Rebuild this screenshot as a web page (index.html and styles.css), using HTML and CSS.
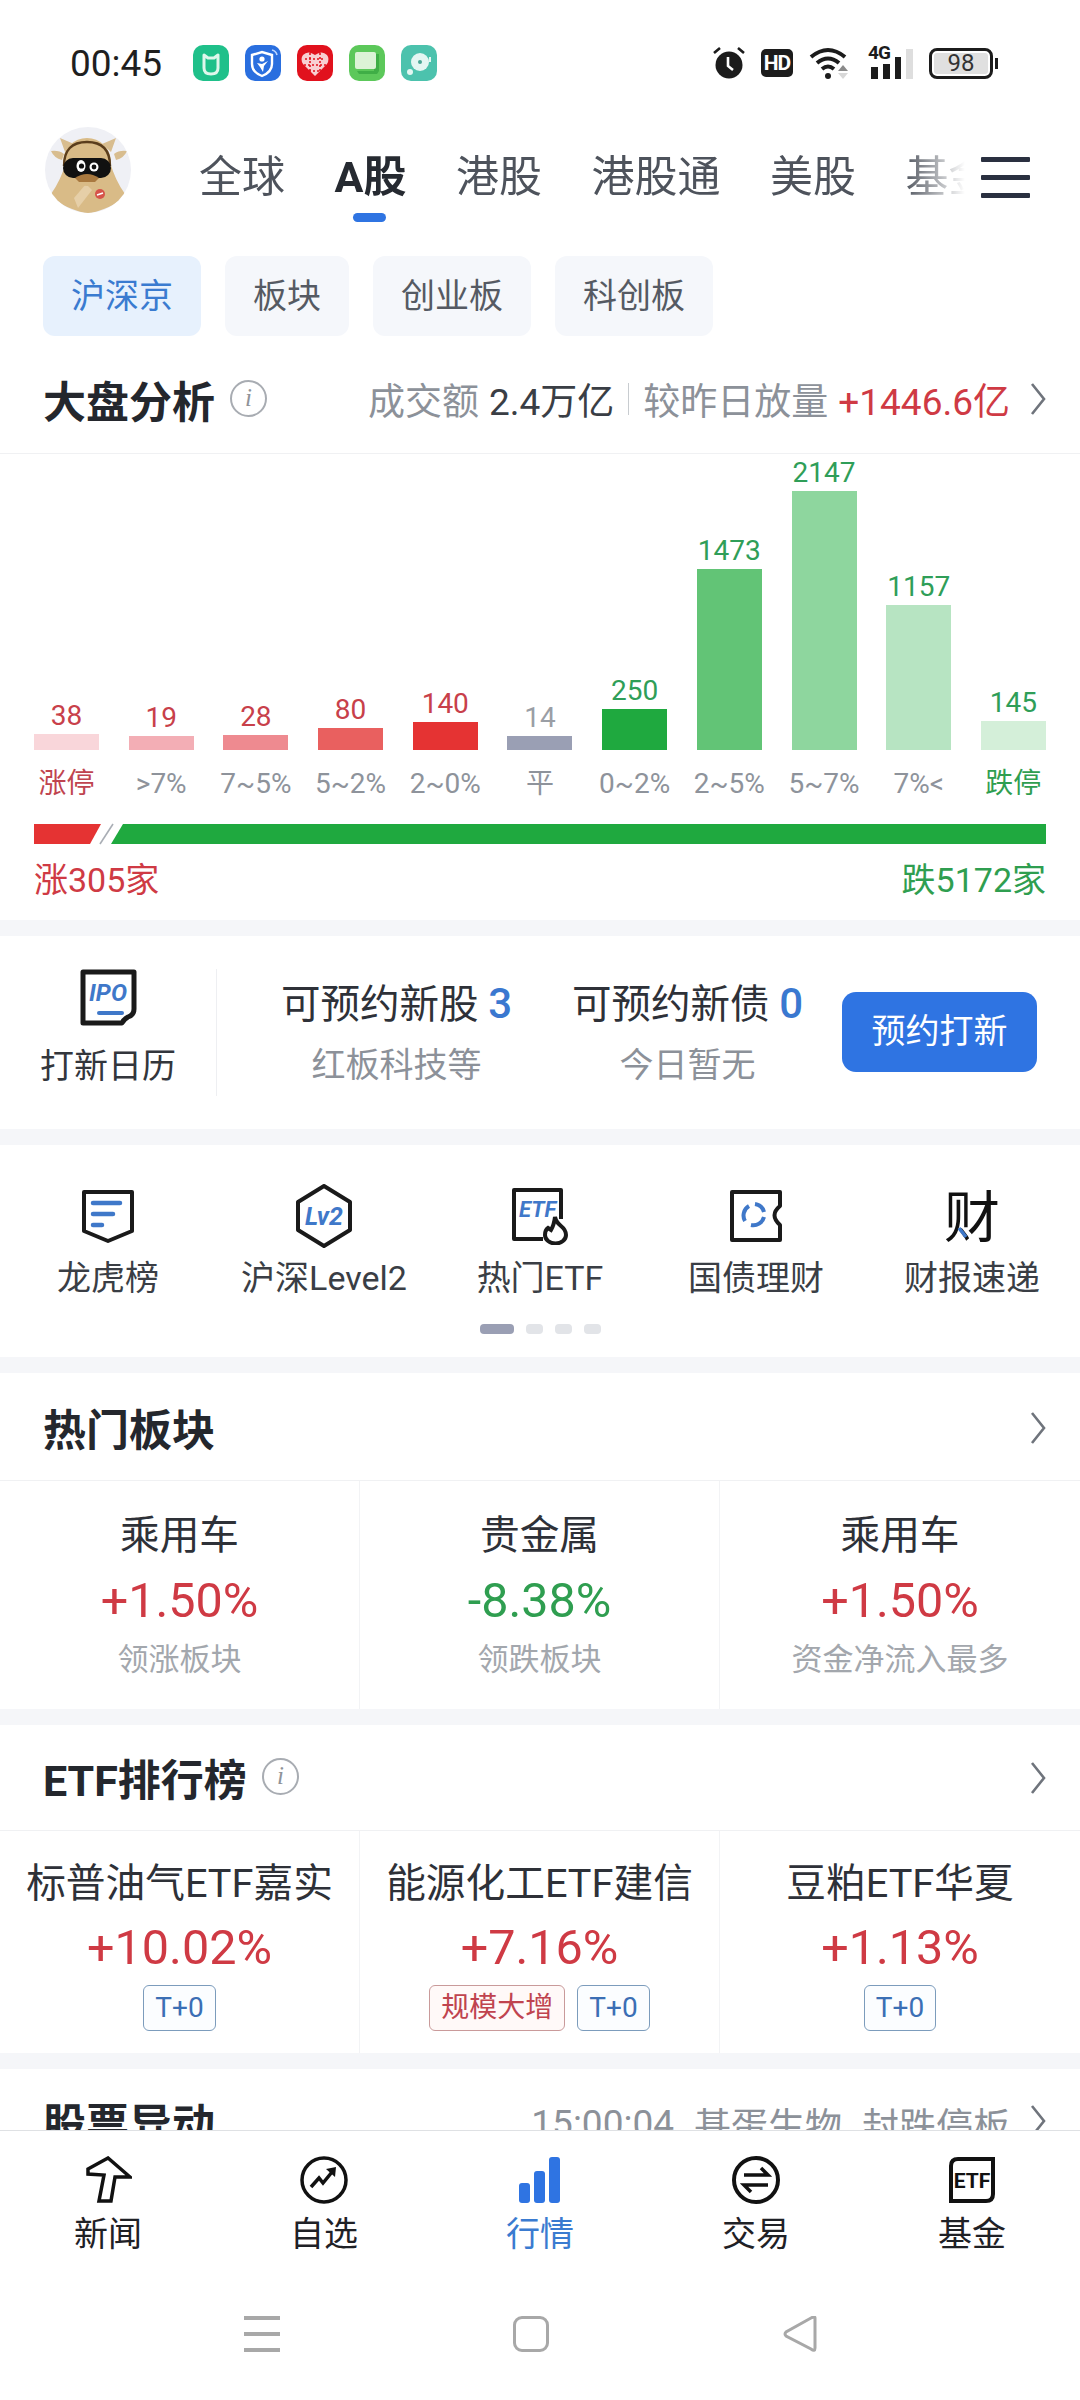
FILE: index.html
```html
<!DOCTYPE html>
<html lang="zh-CN">
<head>
<meta charset="utf-8">
<title>行情</title>
<link rel="stylesheet" href="styles.css">
</head>
<body>
<div class="app">
  <div class="status">
    <span class="time">00:45</span>
    <div class="apps">
      <span class="app-ic mi"><svg viewBox="0 0 36 36" class="ic-fill"><path d="M11 10l4 3h6l4-3v13q0 6-7 6t-7-6z" fill="none" stroke="#dff7ec" stroke-width="3" stroke-linejoin="round"/></svg></span>
      <span class="app-ic shield"><svg viewBox="0 0 36 36" class="ic-fill"><path d="M7 10l10-3 10 3v9q0 8-10 12-10-4-10-12z" fill="none" stroke="#fff" stroke-width="2.4"/><circle cx="17" cy="14" r="2.6" fill="#fff"/><path d="M12 18l5 1 6-3-4 5-1 6-3-5z" fill="#fff"/><path d="M27 5q4 1 5 5" fill="none" stroke="#bcd6ff" stroke-width="1.6"/></svg></span>
      <span class="app-ic heart"><svg viewBox="0 0 36 36" class="ic-fill"><path d="M18 31L6 19q-3-5 0-9 5-5 12 0 7-5 12 0 3 4 0 9z" fill="#f8cfd2"/><path d="M8 14h20M7 20h22M12 26h12M13 8v18M23 8v18" stroke="#e1111d" stroke-width="1.6" stroke-dasharray="2 2"/></svg></span>
      <span class="app-ic msg"><svg viewBox="0 0 36 36" class="ic-fill"><path d="M25 9h5v17l-2 3H10l-2-3h17z" fill="#3fae46"/><rect x="6" y="7" width="21" height="17" rx="2" fill="#dcf3d6"/></svg></span>
      <span class="app-ic disc"><svg viewBox="0 0 36 36" class="ic-fill"><circle cx="19" cy="17" r="9" fill="#e3f6f2"/><circle cx="19" cy="17" r="2" fill="#49a594"/><circle cx="9" cy="27" r="3" fill="#e3f6f2"/><path d="M29 12v5" stroke="#e3f6f2" stroke-width="2"/></svg></span>
    </div>
    <div class="sys">
      <svg class="s-alarm" viewBox="0 0 32 34"><circle cx="16" cy="19" r="13.5" fill="#1c1c1c"/><path d="M1 7l6-5M31 7l-6-5" stroke="#1c1c1c" stroke-width="2.6"/><path d="M15 11v9l5 4" fill="none" stroke="#fff" stroke-width="2.6"/></svg>
      <span class="s-hd">HD</span>
      <svg class="s-wifi" viewBox="0 0 42 34"><path d="M2 11q17-14 34 0M8 17q11-9 22 0M13 23q6-5 12 0" fill="none" stroke="#1c1c1c" stroke-width="4"/><circle cx="19" cy="30" r="3" fill="#1c1c1c"/><path d="M34 19l5 6H29z" fill="#8a8a8a"/><path d="M34 33l5-6H29z" fill="#d8d8d8"/></svg>
      <div class="s-sig">
        <span class="s-4g">4G</span>
        <i class="b1"></i><i class="b2"></i><i class="b3"></i><i class="b4"></i>
      </div>
      <div class="s-bat"><span class="s-bat-in">98</span></div>
    </div>
  </div>

  <div class="header">
    <svg class="avatar" viewBox="0 0 88 88">
      <defs><clipPath id="av"><circle cx="44" cy="44" r="43"/></clipPath></defs>
      <circle cx="44" cy="44" r="43" fill="#eff0f5"/>
      <g clip-path="url(#av)">
        <path d="M16 12l5 14 9-8zM72 12l-5 14-9-8z" fill="#d8bd8f"/>
        <path d="M7 25q8-1 13 3l-2 6q-8-2-11-9zM83 25q-8-1-13 3l2 6q8-2 11-9z" fill="#d8bd8f"/>
        <path d="M22 36q-5 18-15 32 6 12 37 20 31-8 37-20-10-14-15-32z" fill="#d9bb87"/>
        <path d="M30 72l12-14 6 6-14 18z" fill="#e6cfa8"/>
        <circle cx="43" cy="36" r="24" fill="#d9bb87"/>
        <path d="M20 40q0-24 23-24t23 24" fill="none" stroke="#5a3d1c" stroke-width="2.4"/>
        <rect x="19" y="32" width="48" height="20" rx="10" fill="#111"/>
        <path d="M31 52q12-8 24 0l-4 4H35z" fill="#a9793f"/>
        <ellipse cx="37" cy="40" rx="4.500" ry="6" fill="#fff"/><circle cx="37.500" cy="40" r="2.600" fill="#111"/>
        <ellipse cx="50" cy="41" rx="4.500" ry="4.500" fill="#fff"/><circle cx="50" cy="41" r="2.400" fill="#111"/>
        <circle cx="56" cy="68" r="5" fill="#d6534a"/>
        <path d="M53 69l6-2" stroke="#fff" stroke-width="1.400"/>
      </g>
    </svg>
    <div class="tabs">
      <span class="tab">全球</span>
      <span class="tab tab-on">A股</span>
      <span class="tab">港股</span>
      <span class="tab">港股通</span>
      <span class="tab">美股</span>
      <span class="tab">基金</span>
    </div>
    <div class="menu"><i></i><i></i><i></i></div>
  </div>

  <div class="chips">
    <span class="chip chip-on">沪深京</span>
    <span class="chip">板块</span>
    <span class="chip">创业板</span>
    <span class="chip">科创板</span>
  </div>

  <div class="scroll">
    <section class="card">
      <div class="head head-market">
        <span class="title">大盘分析</span>
        <span class="info">i</span>
        <div class="head-right">
          <span class="grey">成交额</span>
          <span class="dark">2.4万亿</span>
          <span class="vsep"></span>
          <span class="grey">较昨日放量</span>
          <span class="red">+1446.6亿</span>
        </div>
        <svg class="chev" viewBox="0 0 16 32"><path d="M2 1l12 15L2 31" fill="none" stroke="#6f747c" stroke-width="2.600"/></svg>
      </div>
      <div class="chart">
        <div class="col"><span class="val v-red">38</span><div class="bar" style="height:16px;background:#f9d6da"></div><span class="lab l-red">涨停</span></div>
        <div class="col"><span class="val v-red">19</span><div class="bar" style="height:14px;background:#f3aeb5"></div><span class="lab">&gt;7%</span></div>
        <div class="col"><span class="val v-red">28</span><div class="bar" style="height:15px;background:#ee8a90"></div><span class="lab">7~5%</span></div>
        <div class="col"><span class="val v-red">80</span><div class="bar" style="height:22px;background:#e9605f"></div><span class="lab">5~2%</span></div>
        <div class="col"><span class="val v-red">140</span><div class="bar" style="height:28px;background:#e53333"></div><span class="lab">2~0%</span></div>
        <div class="col"><span class="val v-grey">14</span><div class="bar" style="height:14px;background:#9a9fb4"></div><span class="lab">平</span></div>
        <div class="col"><span class="val v-green">250</span><div class="bar" style="height:41px;background:#1fa93f"></div><span class="lab">0~2%</span></div>
        <div class="col"><span class="val v-green">1473</span><div class="bar" style="height:181px;background:#62c476"></div><span class="lab">2~5%</span></div>
        <div class="col"><span class="val v-green">2147</span><div class="bar" style="height:259px;background:#8ed69e"></div><span class="lab">5~7%</span></div>
        <div class="col"><span class="val v-green">1157</span><div class="bar" style="height:145px;background:#b7e4c2"></div><span class="lab">7%&lt;</span></div>
        <div class="col"><span class="val v-green">145</span><div class="bar" style="height:29px;background:#d4efd9"></div><span class="lab l-green">跌停</span></div>
      </div>
      <div class="split">
        <div class="split-up"></div>
        <svg class="split-slash" viewBox="0 0 10 20"><path d="M12 0L-1 20" stroke="#a9aeb5" stroke-width="1.600"/></svg>
        <div class="split-down"></div>
      </div>
      <div class="totals"><span class="red">涨305家</span><span class="green">跌5172家</span></div>
    </section>

    <section class="card ipo">
      <div class="ipo-left">
        <svg class="ipo-ic" viewBox="0 0 57 57"><path d="M3 3H54V40Q54 46 48 48Q44 50 42 54H3Z" fill="none" stroke="#1a1a1a" stroke-width="5" stroke-linejoin="round"/><text x="28" y="32" class="ic-txt" font-size="24" text-anchor="middle">IPO</text><path d="M19 44h23" stroke="#3f78c9" stroke-width="4" stroke-linecap="round"/></svg>
        <span class="ipo-lab">打新日历</span>
      </div>
      <div class="stat stat-first">
        <div class="stat-t">可预约新股 <b>3</b></div>
        <div class="stat-s">红板科技等</div>
      </div>
      <div class="stat">
        <div class="stat-t">可预约新债 <b>0</b></div>
        <div class="stat-s">今日暂无</div>
      </div>
      <span class="btn">预约打新</span>
    </section>

    <section class="card tools">
      <div class="tool-row">
        <div class="tool">
          <span class="tool-ic"><svg width="54" height="54" viewBox="0 0 54 54"><path d="M3 3H51V42L27 52L3 42Z" fill="none" stroke="#1a1a1a" stroke-width="4" stroke-linejoin="round"/><path d="M12 14h27M12 25h20M12 36h9" stroke="#3f78c9" stroke-width="4.500" stroke-linecap="round"/></svg></span>
          <span class="tool-lab">龙虎榜</span>
        </div>
        <div class="tool">
          <span class="tool-ic"><svg width="58" height="64" viewBox="0 0 58 64"><path d="M29 2L55 18V46L29 62L3 46V18Z" fill="none" stroke="#1a1a1a" stroke-width="4" stroke-linejoin="round"/><text x="29" y="41" class="ic-txt" font-size="25" text-anchor="middle">Lv2</text></svg></span>
          <span class="tool-lab">沪深Level2</span>
        </div>
        <div class="tool">
          <span class="tool-ic"><svg width="58" height="58" viewBox="0 0 58 58"><path d="M32 52H3V3H50V32" fill="none" stroke="#1a1a1a" stroke-width="4" stroke-linejoin="round"/><text x="8" y="30" class="ic-txt" font-size="22">ETF</text><path d="M44 30q1 5 6 9 5 4 5 9a10.500 8.500 0 0 1-21 0q0-5 3-7l3 2q3-5 4-13z" fill="#fff" stroke="#1a1a1a" stroke-width="4"/></svg></span>
          <span class="tool-lab">热门ETF</span>
        </div>
        <div class="tool">
          <span class="tool-ic"><svg width="54" height="54" viewBox="0 0 54 54"><path d="M3 3H51V17Q40 26 51 36V51H3Z" fill="none" stroke="#1a1a1a" stroke-width="4" stroke-linejoin="round"/><path d="M20 17a11 11 0 0 0-4 15M22 36a11 11 0 0 0 13-8M35 23a11 11 0 0 0-9-8" fill="none" stroke="#3f78c9" stroke-width="4"/></svg></span>
          <span class="tool-lab">国债理财</span>
        </div>
        <div class="tool">
          <span class="tool-ic"><svg width="58" height="58" viewBox="0 0 58 58"><text x="29" y="50" class="ic-cai" font-size="56" text-anchor="middle">财</text><path d="M16 41l7 9" stroke="#3f78c9" stroke-width="3.500"/></svg></span>
          <span class="tool-lab">财报速递</span>
        </div>
      </div>
      <div class="dots"><i class="dot dot-on"></i><i class="dot"></i><i class="dot"></i><i class="dot"></i></div>
    </section>

    <section class="card">
      <div class="head head-sec">
        <span class="title">热门板块</span>
        <svg class="chev chev-push" viewBox="0 0 16 32"><path d="M2 1l12 15L2 31" fill="none" stroke="#6f747c" stroke-width="2.600"/></svg>
      </div>
      <div class="cells">
        <div class="cell"><div class="c-name">乘用车</div><div class="c-pct red">+1.50%</div><div class="c-sub">领涨板块</div></div>
        <div class="cell"><div class="c-name">贵金属</div><div class="c-pct green">-8.38%</div><div class="c-sub">领跌板块</div></div>
        <div class="cell"><div class="c-name">乘用车</div><div class="c-pct red">+1.50%</div><div class="c-sub">资金净流入最多</div></div>
      </div>
    </section>

    <section class="card">
      <div class="head head-etf">
        <span class="title">ETF排行榜</span>
        <span class="info">i</span>
        <svg class="chev chev-push" viewBox="0 0 16 32"><path d="M2 1l12 15L2 31" fill="none" stroke="#6f747c" stroke-width="2.600"/></svg>
      </div>
      <div class="cells">
        <div class="cell cell-etf"><div class="c-name">标普油气ETF嘉实</div><div class="c-pct c-pct-etf red">+10.02%</div><div class="tags"><span class="tag">T+0</span></div></div>
        <div class="cell cell-etf"><div class="c-name">能源化工ETF建信</div><div class="c-pct c-pct-etf red">+7.16%</div><div class="tags"><span class="tag tag-red">规模大增</span><span class="tag">T+0</span></div></div>
        <div class="cell cell-etf"><div class="c-name">豆粕ETF华夏</div><div class="c-pct c-pct-etf red">+1.13%</div><div class="tags"><span class="tag">T+0</span></div></div>
      </div>
    </section>

    <section class="card">
      <div class="head head-etf">
        <span class="title">股票异动</span>
        <div class="head-right head-move">
          <span class="grey">15:00:04</span>
          <span class="grey">基蛋生物</span>
          <span class="grey">封跌停板</span>
        </div>
        <svg class="chev" viewBox="0 0 16 32"><path d="M2 1l12 15L2 31" fill="none" stroke="#6f747c" stroke-width="2.600"/></svg>
      </div>
    </section>
  </div>

  <nav class="nav">
    <div class="nav-item">
      <svg class="nav-ic" width="48" height="48" viewBox="0 0 48 48"><path d="M24 2L4 13V18L20 19L15 45H27L31 21L46 21Z" fill="none" stroke="#111" stroke-width="3.500" stroke-linejoin="miter"/></svg>
      <span>新闻</span>
    </div>
    <div class="nav-item">
      <svg class="nav-ic" width="48" height="48" viewBox="0 0 48 48"><circle cx="24" cy="24" r="22" fill="none" stroke="#111" stroke-width="3.500"/><path d="M11 31l8-9 4 5 9-11" fill="none" stroke="#111" stroke-width="3.500"/><path d="M26 13l10-2-1 10z" fill="#111"/></svg>
      <span>自选</span>
    </div>
    <div class="nav-item nav-on">
      <svg class="nav-ic" width="48" height="48" viewBox="0 0 48 48"><rect x="3" y="27" width="11" height="20" rx="3" fill="#2f74e2"/><rect x="18" y="15" width="11" height="32" rx="3" fill="#2f74e2"/><rect x="33" y="1" width="11" height="46" rx="3" fill="#2f74e2"/></svg>
      <span>行情</span>
    </div>
    <div class="nav-item">
      <svg class="nav-ic" width="48" height="48" viewBox="0 0 48 48"><circle cx="24" cy="24" r="22" fill="none" stroke="#111" stroke-width="4"/><path d="M12 19h24l-7-7M36 29H12l7 7" fill="none" stroke="#111" stroke-width="3.500"/></svg>
      <span>交易</span>
    </div>
    <div class="nav-item">
      <svg class="nav-ic" width="48" height="48" viewBox="0 0 48 48"><path d="M3 10Q3 3 10 3H45V38Q45 45 38 45H3Z" fill="none" stroke="#111" stroke-width="4"/><text x="24" y="32" class="ic-etf" font-size="21" text-anchor="middle">ETF</text></svg>
      <span>基金</span>
    </div>
  </nav>

  <div class="sysnav">
    <div class="sn-menu"><i></i><i></i><i></i></div>
    <div class="sn-home"></div>
    <svg class="sn-back" width="36" height="36" viewBox="0 0 36 36"><path d="M33 2V32Q33 36 29 33L4 20Q2 18 4 16L29 2Q33 0 33 2Z" fill="none" stroke="#a8a8a8" stroke-width="3"/></svg>
  </div>
</div>
</body>
</html>
```

FILE: styles.css
```css
* { box-sizing: border-box; }
html, body { margin: 0; padding: 0; background: #fff; }
body { font-family: Roboto, "Noto Sans CJK SC", sans-serif; color: #2a2d33; }
i { font-style: normal; display: block; }
svg { display: block; }

.app { width: 1080px; height: 2400px; display: flex; flex-direction: column; overflow: hidden; background: #fff; }

/* status bar */
.status { height: 110px; padding: 16px 87px 0 70px; display: flex; align-items: center; flex-shrink: 0; }
.time { font-size: 37px; width: 95px; color: #1f1f1f; margin-right: 28px; }
.apps { display: flex; gap: 16px; }
.app-ic { width: 36px; height: 36px; border-radius: 10px; display: block; overflow: hidden; }
.ic-fill { width: 36px; height: 36px; }
.mi { background: #1fc08a; }
.shield { background: #2a6fdf; }
.heart { background: #e1111d; }
.msg { background: #5cc85a; }
.disc { background: #4cc2ad; }
.sys { margin-left: auto; display: flex; align-items: center; gap: 16px; }
.s-alarm { width: 32px; height: 34px; }
.s-hd { width: 32px; height: 28px; background: #1c1c1c; color: #fff; border-radius: 5px; font-size: 21px; font-weight: 700; line-height: 28px; text-align: center; letter-spacing: -1px; }
.s-wifi { width: 42px; height: 34px; }
.s-sig { width: 46px; height: 32px; padding-left: 4px; position: relative; display: flex; align-items: flex-end; gap: 5px; }
.s-4g { position: absolute; left: 1px; top: -3px; font-size: 19px; font-weight: 700; line-height: 18px; letter-spacing: -1px; color: #1c1c1c; }
.s-sig i { width: 7px; background: #1c1c1c; }
.s-sig .b1 { height: 12px; }
.s-sig .b2 { height: 15px; }
.s-sig .b3 { height: 22px; }
.s-sig .b4 { height: 30px; background: #dedede; }
.s-bat { width: 64px; height: 31px; border: 3px solid #1c1c1c; border-radius: 8px; padding: 2px; position: relative; }
.s-bat::after { content: ""; position: absolute; right: -8px; top: 7px; width: 3px; height: 11px; background: #1c1c1c; }
.s-bat-in { display: block; height: 100%; background: #e0e0e0; border-radius: 3px; font-size: 24px; line-height: 21px; text-align: center; color: #333; }

/* header */
.header { height: 134px; padding-left: 44px; display: flex; align-items: center; flex-shrink: 0; }
.avatar { width: 88px; height: 88px; margin-top: -14px; flex-shrink: 0; }
.tabs { width: 766px; margin-left: 67px; display: flex; gap: 49.500px; overflow: hidden; white-space: nowrap; -webkit-mask-image: linear-gradient(to right, #000 92%, transparent 100%); mask-image: linear-gradient(to right, #000 92%, transparent 100%); padding-bottom: 16px; margin-bottom: -16px; }
.tab { font-size: 43px; line-height: 60px; color: #4e535c; position: relative; flex-shrink: 0; }
.tab-on { color: #262a31; font-weight: 700; }
.tab-on::after { content: ""; position: absolute; left: 50%; margin-left: -17px; top: 66px; width: 33px; height: 9px; border-radius: 5px; background: #2f74e2; }
.menu { width: 49px; margin-left: 16px; display: flex; flex-direction: column; gap: 13px; }
.menu i { height: 5px; background: #2a3040; border-radius: 1px; }

/* chips */
.chips { padding: 12px 0 0 43px; display: flex; gap: 24px; flex-shrink: 0; }
.chip { height: 80px; line-height: 80px; padding: 0 28px; border-radius: 12px; background: #f5f7fb; font-size: 34px; color: #555a63; }
.chip-on { background: #e7f1fd; color: #3a7bd0; }

/* scrolling body */
.scroll { flex: 1; min-height: 0; overflow: hidden; background: #f5f6f9; }
.card { background: #fff; margin-bottom: 16px; }

.head { display: flex; align-items: center; padding: 0 34px 0 43px; border-bottom: 1px solid #f0f1f3; }
.head-market { height: 118px; padding-top: 8px; }
.head-sec { height: 108px; }
.head-etf { height: 106px; padding-bottom: 2px; }
.title { font-size: 43px; font-weight: 700; color: #24272d; white-space: nowrap; }
.info { width: 37px; height: 37px; margin-left: 15px; border: 2px solid #a8acb2; border-radius: 50%; font: italic 25px/32px "Liberation Serif", serif; text-align: center; color: #8f9399; }
.head-right { margin-left: auto; display: flex; align-items: center; gap: 10px; font-size: 37px; white-space: nowrap; }
.head-move { gap: 20px; font-size: 37px; padding-top: 6px; }
.vsep { width: 1px; height: 32px; background: #c8ccd0; margin: 0 4px; }
.grey { color: #8c9199; }
.dark { color: #3a3e45; }
.red { color: #cf3a44; }
.green { color: #2f9e50; }
.chev { width: 16px; height: 32px; margin-left: 20px; flex-shrink: 0; }
.chev-push { margin-left: auto; margin-top: 3px; }

/* chart */
.chart { display: grid; grid-template-columns: repeat(11, 65px); column-gap: 29.7px; padding: 3px 34px 0; height: 355px; }
.col { display: flex; flex-direction: column; align-items: center; justify-content: flex-end; }
.val { font-size: 28px; line-height: 32px; margin-bottom: 2px; white-space: nowrap; }
.v-red { color: #c8404a; }
.v-grey { color: #9a9ea5; }
.v-green { color: #2f9e58; }
.bar { width: 65px; flex-shrink: 0; }
.lab { font-size: 28px; line-height: 36px; height: 36px; margin-top: 16px; margin-bottom: 7px; color: #8e939b; white-space: nowrap; }
.l-red { color: #c0444f; }
.l-green { color: #2f9e50; }

.split { display: flex; height: 20px; margin: 15px 34px 0; }
.split-up { width: 67px; background: #e53333; clip-path: polygon(0 0, 100% 0, calc(100% - 11px) 100%, 0 100%); }
.split-slash { width: 10px; height: 20px; overflow: visible; }
.split-down { flex: 1; background: #1fa93f; clip-path: polygon(12px 0, 100% 0, 100% 100%, 0 100%); }
.totals { display: flex; justify-content: space-between; padding: 14px 34px 18px; font-size: 34px; line-height: 44px; height: 76px; }

/* ipo */
.ipo { display: flex; align-items: flex-start; padding: 33px 0; height: 193px; }
.ipo-left { width: 217px; height: 127px; border-right: 1px solid #eeeff2; display: flex; flex-direction: column; align-items: center; }
.ipo-ic { width: 57px; height: 57px; }
.ipo-lab { font-size: 34px; line-height: 44px; margin-top: 18px; color: #33363c; }
.ic-txt { font-family: Roboto, sans-serif; font-style: italic; font-weight: 700; fill: #3f78c9; }
.ic-etf { font-family: Roboto, sans-serif; font-weight: 700; fill: #111; }
.ic-cai { font-family: "Noto Sans CJK SC", sans-serif; fill: #111; }
.stat { width: 291px; text-align: center; padding-top: 10px; }
.stat-first { margin-left: 34px; }
.stat-t { font-size: 39.500px; line-height: 50px; color: #2e3138; white-space: nowrap; }
.stat-t b { font-family: Roboto, sans-serif; font-weight: 500; font-size: 42px; color: #3a78d0; }
.stat-s { font-size: 34px; line-height: 44px; margin-top: 13px; color: #8c9199; }
.btn { width: 195px; height: 80px; margin: 23px 0 0 9px; border-radius: 14px; background: #2f74e2; color: #fff; font-size: 34px; line-height: 78px; text-align: center; flex-shrink: 0; }

/* tools */
.tools { height: 212px; padding-top: 39px; }
.tool-row { display: grid; grid-template-columns: repeat(5, 1fr); }
.tool { display: flex; flex-direction: column; align-items: center; }
.tool-ic { height: 64px; display: flex; align-items: center; justify-content: center; }
.tool-lab { font-size: 34px; line-height: 44px; margin-top: 8px; color: #3a3e45; white-space: nowrap; }
.dots { display: flex; justify-content: center; gap: 12px; margin: 24px 0 0 0; }
.dot { width: 17px; height: 10px; border-radius: 4px; background: #e2e4e8; }
.dot-on { width: 34px; background: #9a9fb4; }

/* cells */
.cells { display: grid; grid-template-columns: repeat(3, 1fr); }
.cell { height: 228px; padding-top: 30px; text-align: center; border-right: 1px solid #f2f3f5; }
.cell:last-child { border-right: 0; }
.cell-etf { height: 222px; padding-top: 28px; }
.c-name { font-size: 39.700px; line-height: 50px; color: #2e3138; white-space: nowrap; }
.c-pct { font-size: 48.500px; line-height: 60px; margin-top: 10px; }
.c-pct-etf { margin-top: 9px; }
.c-sub { font-size: 31px; line-height: 40px; margin-top: 9px; color: #a3a7ad; white-space: nowrap; }
.tags { display: flex; justify-content: center; gap: 12px; margin-top: 7px; }
.tag { height: 46px; padding: 0 11px; border: 1px solid #7c9cbc; border-radius: 6px; font-size: 28px; line-height: 43px; color: #3b6fb5; background: #fbfdff; }
.tag-red { border-color: #c99a9a; color: #c0444f; background: #fff9f8; }

/* bottom nav */
.nav { height: 165px; flex-shrink: 0; border-top: 1px solid #dfe1e4; display: grid; grid-template-columns: repeat(5, 1fr); padding-top: 25px; background: #fff; }
.nav-item { display: flex; flex-direction: column; align-items: center; font-size: 34px; line-height: 44px; color: #1f2126; }
.nav-ic { width: 48px; height: 48px; margin-bottom: 8px; }
.nav-on { color: #3a7bd0; }

.sysnav { height: 105px; flex-shrink: 0; display: flex; align-items: flex-start; padding: 21px 0 0 244px; gap: 233px; background: #fff; }
.sn-menu { width: 36px; height: 36px; display: flex; flex-direction: column; justify-content: space-between; }
.sn-menu i { height: 4px; background: #a8a8a8; }
.sn-home { width: 36px; height: 36px; border: 3.5px solid #a8a8a8; border-radius: 9px; }
.sn-back { width: 36px; height: 36px; }
```
